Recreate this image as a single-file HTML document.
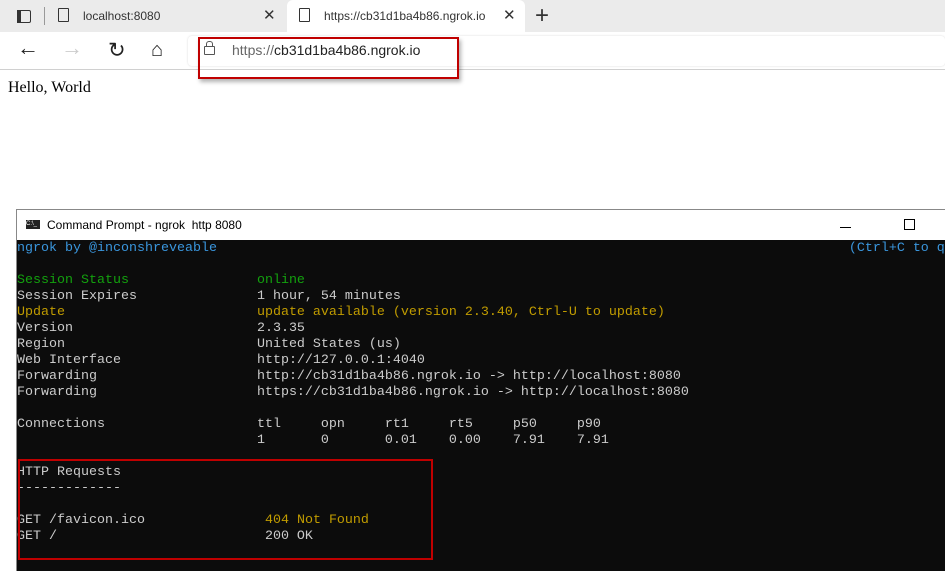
<!DOCTYPE html>
<html><head><style>
body{margin:0;width:945px;height:570px;overflow:hidden;background:#fff;position:relative;font-family:"Liberation Sans",sans-serif}
.tabs{position:absolute;left:0;top:0;width:945px;height:32px;background:#ebebeb}
.tab{position:absolute;top:0;height:32px;font-size:12px;color:#333;line-height:32px}
.toolbar{position:absolute;top:32px;left:0;width:945px;height:37px;background:#fff;border-bottom:1px solid #d0d0d0}
.addr{position:absolute;left:188px;top:36px;width:757px;height:30px;background:#fff;box-shadow:0 0 2px rgba(0,0,0,.15);border-radius:4px}
.red{position:absolute;border:2px solid #c00000}
.con{position:absolute;left:16px;top:209px;width:929px;height:361px;border:1px solid #888;border-right:none;border-bottom:none;background:#0c0c0c}
.tb{position:absolute;left:0;top:0;width:929px;height:30px;background:#fff;font-size:12px;color:#000}
pre{position:absolute;left:0;top:31px;margin:0;font-family:"Liberation Mono",monospace;font-size:13.33px;line-height:16px;color:#cccccc}
.g{color:#13a10e}.y{color:#c19c00}.c{color:#3a96dd}
</style></head><body>
<div class="tabs">
<div style="position:absolute;left:17px;top:10px;width:12px;height:11px;border:1.5px solid #333;border-radius:2px"></div>
<div style="position:absolute;left:17px;top:10px;width:4px;height:13px;background:#333"></div>
<div style="position:absolute;left:44px;top:7px;width:1px;height:18px;background:#999"></div>
<div class="tab" style="left:56px;width:230px"><span style="display:inline-block;width:9px;height:12px;border:1.3px solid #333;border-radius:1px;vertical-align:-2px;margin-left:2px"></span><span style="margin-left:14px">localhost:8080</span><span style="position:absolute;left:207px;font-size:15px">✕</span></div>
<div class="tab" style="left:287px;width:238px;background:#fff;border-radius:6px 6px 0 0"><span style="display:inline-block;width:9px;height:12px;border:1.3px solid #333;border-radius:1px;vertical-align:-2px;margin-left:12px"></span><span style="margin-left:14px">https://cb31d1ba4b86.ngrok.io</span><span style="position:absolute;left:216px;font-size:15px">✕</span></div>
<div style="position:absolute;left:535px;top:2px;font-size:24px;color:#333;font-weight:300">+</div>
</div>
<div class="toolbar">
<div style="position:absolute;left:17px;top:3px;font-size:22px;color:#222">←</div>
<div style="position:absolute;left:61px;top:3px;font-size:22px;color:#ccc">→</div>
<div style="position:absolute;left:108px;top:6px;font-size:21px;color:#222">↻</div>
<div style="position:absolute;left:151px;top:7px;font-size:20px;color:#222">⌂</div>
</div>
<div class="addr"><div style="position:absolute;left:16px;top:10px;width:9px;height:7px;border:1.3px solid #555;border-radius:1px"></div><div style="position:absolute;left:18px;top:5px;width:5px;height:5px;border:1.3px solid #555;border-bottom:none;border-radius:3px 3px 0 0"></div><div style="position:absolute;left:44px;top:6px;font-size:14px;color:#222"><span style="color:#666">https://</span>cb31d1ba4b86.ngrok.io</div></div>
<div class="red" style="left:198px;top:37px;width:257px;height:38px;box-shadow:2px 3px 4px rgba(0,0,0,.3)"></div>
<div style="position:absolute;left:8px;top:79px;font-family:'Liberation Serif',serif;font-size:16px">Hello, World</div>
<div class="con">
<div class="tb"><div style="position:absolute;left:9px;top:10px;width:14px;height:9px;background:#222;color:#fff;font-size:6px;line-height:9px">C:\_</div><div style="position:absolute;left:30px;top:8px">Command Prompt - ngrok&nbsp; http 8080</div><div style="position:absolute;left:823px;top:17px;width:11px;height:1px;background:#000"></div><div style="position:absolute;left:887px;top:9px;width:9px;height:9px;border:1px solid #000"></div></div>
<pre><span class="c">ngrok by @inconshreveable</span>                                                                               <span class="c">(Ctrl+C to q</span>

<span class="g">Session Status                online</span>
Session Expires               1 hour, 54 minutes
<span class="y">Update                        update available (version 2.3.40, Ctrl-U to update)</span>
Version                       2.3.35
Region                        United States (us)
Web Interface                 http://127.0.0.1:4040
Forwarding                    http://cb31d1ba4b86.ngrok.io -> http://localhost:8080
Forwarding                    https://cb31d1ba4b86.ngrok.io -> http://localhost:8080

Connections                   ttl     opn     rt1     rt5     p50     p90
                              1       0       0.01    0.00    7.91    7.91

HTTP Requests
-------------

GET /favicon.ico               <span class="y">404 Not Found</span>
GET /                          200 OK</pre>
</div>
<div class="red" style="left:18px;top:459px;width:411px;height:97px"></div>
</body></html>
